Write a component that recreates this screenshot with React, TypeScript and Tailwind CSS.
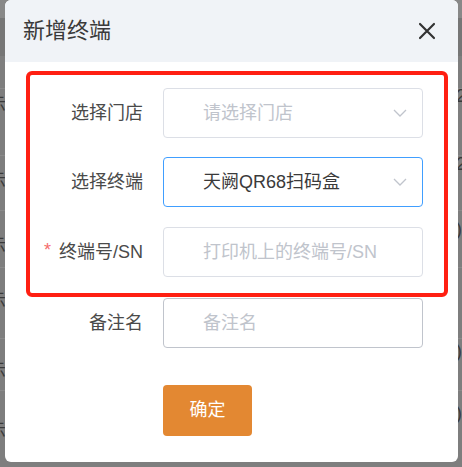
import React from "react";

const cjk = { fontFamily: '"Liberation Sans", "Noto Sans CJK SC", sans-serif' };

function Chevron() {
  return (
    <svg width="14" height="8" viewBox="0 0 14 8" fill="none">
      <path d="M1 1L7 7L13 1" stroke="#c0c4cc" strokeWidth="1.3" />
    </svg>
  );
}

function Row({
  label,
  required,
  className,
  children,
}: {
  label: string;
  required?: boolean;
  className?: string;
  children: React.ReactNode;
}) {
  return (
    <div className={"flex items-center h-[50px] " + (className ?? "")}>
      <div className="w-[113px] text-right text-[18px] text-[#4a4a4a] flex justify-end items-center">
        {required && <span className="text-[#f56c6c] mr-[8px] relative top-[-2px]">*</span>}
        {label}
      </div>
      <div className="ml-[20px] w-[260px] h-[50px]">{children}</div>
    </div>
  );
}

export default function App() {
  const leftRows = [104, 180, 245, 300, 370, 430];
  const rightRows = [95, 163, 228, 350, 412];
  return (
    <div className="relative w-[462px] h-[467px] bg-[#7e7e7e] overflow-hidden" style={cjk}>
      {/* background page (dimmed) */}
      <div className="absolute inset-0">
        <div className="h-[18px] bg-[#888]" />
        <div className="h-[38px] bg-[#767676]" />
        {leftRows.map((y, i) => (
          <div key={i} className="absolute left-[-12px] text-[18px] text-[#3a3a3a]" style={{ top: y - 12 }}>
            示
          </div>
        ))}
        {rightRows.map((y, i) => (
          <div key={i} className="absolute left-[456px] text-[18px] text-[#3a3a3a]" style={{ top: y - 12 }}>
            {i < 2 ? "2" : ")"}
          </div>
        ))}
        {[88, 155, 210, 267, 338, 390].map((y, i) => (
          <div key={i} className="absolute left-0 right-0 h-px bg-[#8a8a8a]" style={{ top: y }} />
        ))}
      </div>

      {/* dialog */}
      <div className="absolute left-[5px] top-0 w-[453px] h-[462px] bg-white rounded-[6px] overflow-hidden">
        <div className="h-[62px] bg-[#f0f3f7] flex items-center justify-between pl-[18px] pr-[22px]">
          <span className="text-[22px] text-[#3a3a3a] leading-none">新增终端</span>
          <svg width="18" height="18" viewBox="0 0 18 18" fill="none">
            <path d="M2 2L16 16M16 2L2 16" stroke="#333" strokeWidth="2.2" strokeLinecap="round" />
          </svg>
        </div>

        <div className="pt-[9px] pl-[21px]">
          <div className="w-[422px] border-[4px] border-[#ff1f12] rounded-[6px] pt-[13px] pb-[16px] flex flex-col">
            <Row label="选择门店">
              <div className="h-full border border-[#dcdfe6] rounded-[4px] flex items-center justify-between pl-[39px] pr-[15px]">
                <span className="text-[18px] text-[#c0c4cc]">请选择门店</span>
                <Chevron />
              </div>
            </Row>
            <Row label="选择终端" className="mt-[19px]">
              <div className="h-full border border-[#409eff] rounded-[4px] flex items-center justify-between pl-[39px] pr-[15px]">
                <span className="text-[18px] text-[#3a3a3a]">天阙QR68扫码盒</span>
                <Chevron />
              </div>
            </Row>
            <Row label="终端号/SN" required className="mt-[20px]">
              <div className="h-full border border-[#dcdfe6] rounded-[4px] flex items-center pl-[39px]">
                <span className="text-[18px] text-[#c0c4cc]">打印机上的终端号/SN</span>
              </div>
            </Row>
          </div>
        </div>

        <div className="pl-[25px] pt-[1px]">
          <Row label="备注名">
            <div className="h-full border border-[#c0c4cc] rounded-[4px] flex items-center pl-[39px]">
              <span className="text-[18px] text-[#c0c4cc]">备注名</span>
            </div>
          </Row>
        </div>

        <div className="pl-[158px] pt-[37px]">
          <button className="w-[89px] h-[51px] bg-[#e38832] rounded-[4px] text-white text-[18px]">确定</button>
        </div>
      </div>
    </div>
  );
}
